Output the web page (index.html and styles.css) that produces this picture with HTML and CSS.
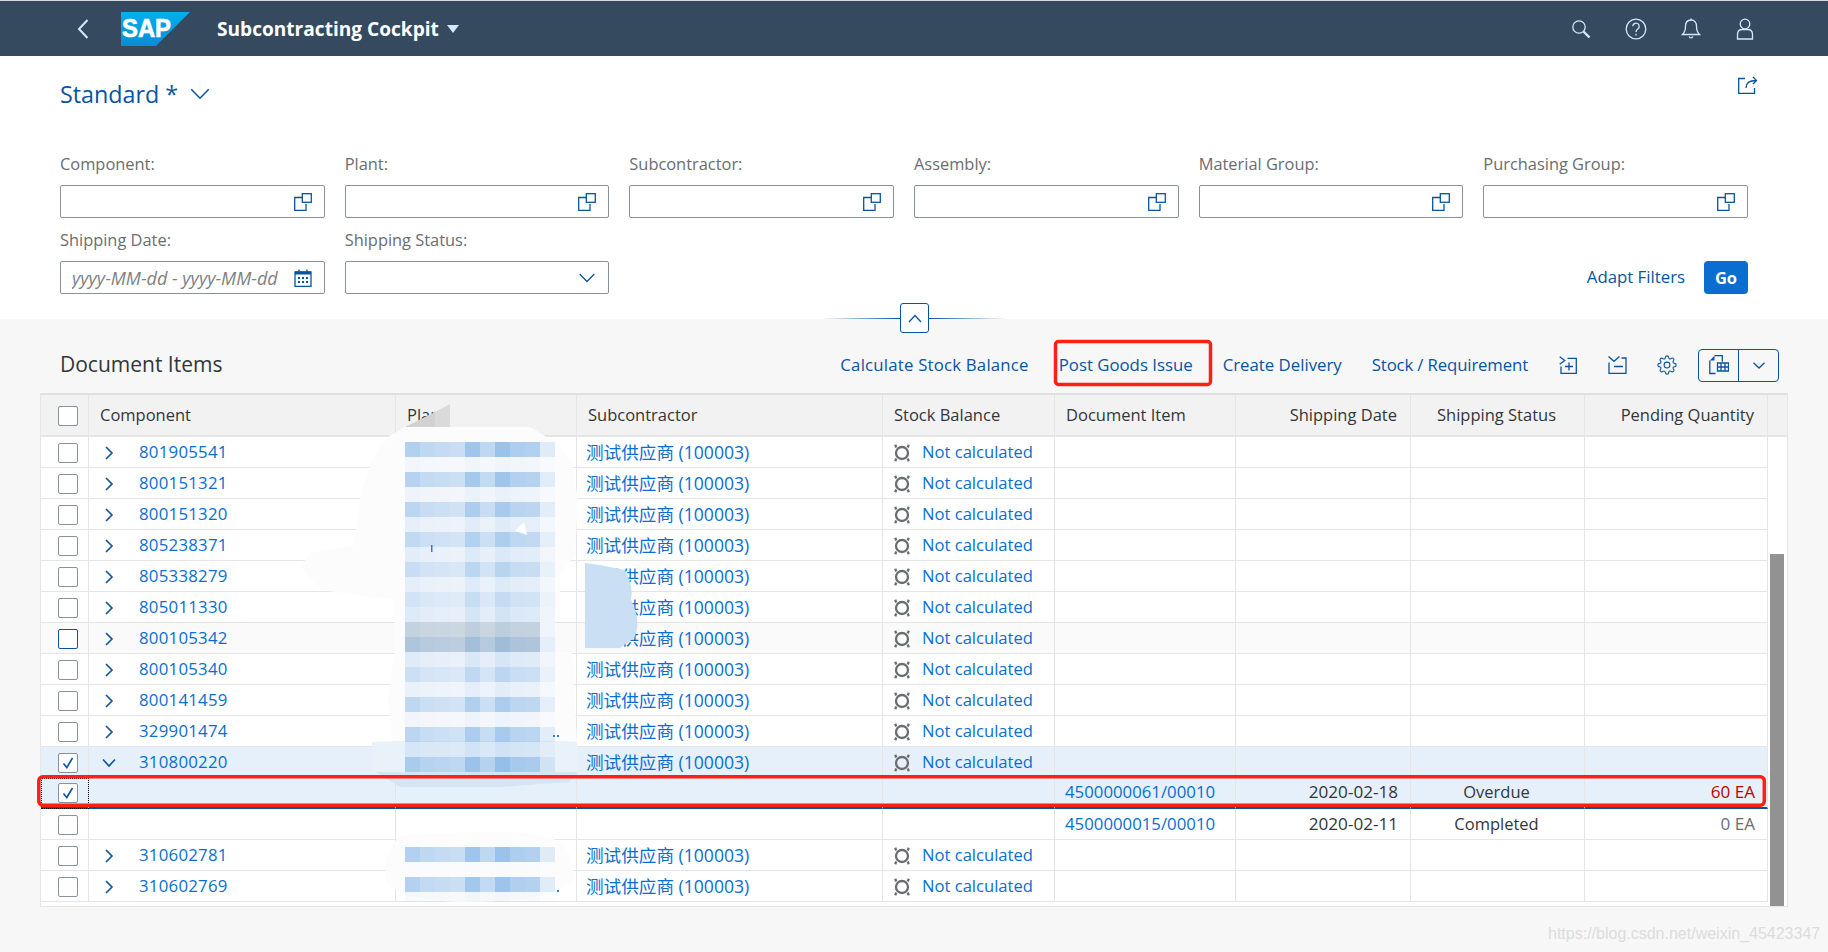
FILE: index.html
```html
<!DOCTYPE html>
<html lang="en">
<head>
<meta charset="utf-8">
<title>Subcontracting Cockpit</title>
<link rel="stylesheet" href="styles.css">
</head>
<body>
<svg class="defs" width="0" height="0" aria-hidden="true">
  <symbol id="i-vh" viewBox="0 0 18 18"><path d="M8 4.500H.7v12.800h11.300V11"/><rect x="8.300" y=".7" width="9" height="8.600"/></symbol>
  <symbol id="i-cal" viewBox="0 0 18 18"><path d="M1 3h16v14.300H1z"/><path d="M1 2.500h16v3H1z" class="fill"/><path d="M5 .5v3M13 .5v3"/><path d="M4 8h2v2H4zM8 8h2v2H8zM12 8h2v2h-2zM4 12h2v2H4zM8 12h2v2H8zM12 12h2v2h-2z" class="fill"/></symbol>
  <symbol id="i-down" viewBox="0 0 16 10"><path d="M.7 1l7.300 7.500L15.300 1"/></symbol>
  <symbol id="i-status" viewBox="0 0 20 20"><circle cx="10" cy="10" r="6"/><path d="M3.200 1.800l1.100 2.700M16.800 1.800l-1.100 2.700M3.200 18.200l1.100-2.700M16.800 18.200l-1.100-2.700" class="thin"/></symbol>
  <symbol id="i-right" viewBox="0 0 10 14"><path d="M2 1l6 6-6 6"/></symbol>
  <symbol id="i-open" viewBox="0 0 14 10"><path d="M1 1.500l6 6.500 6-6.500"/></symbol>
</svg>

<header class="shell">
  <svg class="back" width="12" height="20" viewBox="0 0 12 20"><path d="M10.500 1L2 10l8.500 9"/></svg>
  <svg class="logo" width="69" height="34" viewBox="0 0 69 34">
    <defs><linearGradient id="sap" x1="0" y1="0" x2="0" y2="1"><stop offset="0" stop-color="#00b1eb"/><stop offset="1" stop-color="#0a8bd6"/></linearGradient></defs>
    <path d="M0 0h69L35 34H0z" fill="url(#sap)"/>
    <text x="1" y="25" class="logo-text" textLength="49" lengthAdjust="spacingAndGlyphs">SAP</text>
  </svg>
  <h1 class="app-title">Subcontracting Cockpit</h1>
  <span class="title-arrow"></span>
  <div class="shell-icons">
    <svg width="20" height="20" viewBox="0 0 20 20"><circle cx="8" cy="8" r="6.200"/><path d="M12.500 12.500l6 6" class="heavy"/></svg>
    <svg width="22" height="22" viewBox="0 0 22 22"><circle cx="11" cy="11" r="9.800"/><path d="M7.800 8.300a3.200 3.200 0 1 1 5 2.700c-1.200.8-1.800 1.300-1.800 3"/><path d="M11 15.800v1.800"/></svg>
    <svg width="20" height="22" viewBox="0 0 20 22"><path d="M10 2c-3.800 0-5.500 3-5.500 6.200 0 4-1 6.300-3 8.300h17c-2-2-3-4.300-3-8.300C15.500 5 13.800 2 10 2z"/><path d="M10 .5V2M8.200 18.500c.5 1.800 3 1.800 3.600 0"/></svg>
    <svg width="20" height="22" viewBox="0 0 20 22"><circle cx="10" cy="6" r="4.800"/><path d="M2.500 21v-4.500c0-3 2-5 4.800-5h5.400c2.800 0 4.800 2 4.800 5V21z"/></svg>
  </div>
</header>

<section class="filterbar">
  <div class="variant">
    <span class="variant-name">Standard *</span>
    <svg class="variant-arrow" width="20" height="12"><use href="#i-down"/></svg>
    <svg class="share" width="20" height="18" viewBox="0 0 20 18"><path d="M7 2.500H.7v15h15.800V12"/><path d="M8 12c0-5 3-7.500 10-7.500M15 1l3.500 3.500L15 8"/></svg>
  </div>
  <div class="filters">
    <div class="filter"><label class="filter-label">Component:</label><div class="input"><svg class="ico"><use href="#i-vh"/></svg></div></div>
    <div class="filter"><label class="filter-label">Plant:</label><div class="input"><svg class="ico"><use href="#i-vh"/></svg></div></div>
    <div class="filter"><label class="filter-label">Subcontractor:</label><div class="input"><svg class="ico"><use href="#i-vh"/></svg></div></div>
    <div class="filter"><label class="filter-label">Assembly:</label><div class="input"><svg class="ico"><use href="#i-vh"/></svg></div></div>
    <div class="filter"><label class="filter-label">Material Group:</label><div class="input"><svg class="ico"><use href="#i-vh"/></svg></div></div>
    <div class="filter"><label class="filter-label">Purchasing Group:</label><div class="input"><svg class="ico"><use href="#i-vh"/></svg></div></div>
    <div class="filter"><label class="filter-label">Shipping Date:</label><div class="input"><span class="placeholder">yyyy-MM-dd - yyyy-MM-dd</span><svg class="ico"><use href="#i-cal"/></svg></div></div>
    <div class="filter"><label class="filter-label">Shipping Status:</label><div class="input"><svg class="ico-down"><use href="#i-down"/></svg></div></div>
    <div class="filter-actions"><span class="link">Adapt Filters</span><span class="go">Go</span></div>
  </div>
  <div class="collapser">
    <span class="collapser-line"></span>
    <span class="collapser-btn"><svg width="14" height="9" viewBox="0 0 14 9"><path d="M1 8l6-6.500L13 8"/></svg></span>
    <span class="collapser-line"></span>
  </div>
</section>

<section class="toolbar">
  <h2 class="table-title">Document Items</h2>
  <div class="actions">
    <span class="link wide">Calculate Stock Balance</span>
    <span class="link">Post Goods Issue</span>
    <span class="link">Create Delivery</span>
    <span class="link narrow">Stock / Requirement</span>
    <svg class="tool tool-first" width="18" height="18" viewBox="0 0 18 18"><path d="M.7.7l5 3.800-5 3.800M8.500 2.300h8.800v15H2V10.500M6 10.500h8M10 6.500v8"/></svg>
    <svg class="tool" width="19" height="18" viewBox="0 0 19 18"><path d="M.5.5L6 5.300 11.500.5M1 6.500v10.800h17V2h-4.500M6 10.500h9"/></svg>
    <svg class="tool" width="20" height="20" viewBox="0 0 24 24"><circle cx="12" cy="12" r="3.500"/><path d="M19.400 15a1.650 1.650 0 0 0 .33 1.820l.06.06a2 2 0 0 1 0 2.830 2 2 0 0 1-2.830 0l-.06-.06a1.650 1.650 0 0 0-1.820-.33 1.650 1.650 0 0 0-1 1.510V21a2 2 0 0 1-2 2 2 2 0 0 1-2-2v-.09A1.650 1.650 0 0 0 9 19.400a1.650 1.650 0 0 0-1.820.33l-.06.06a2 2 0 0 1-2.830 0 2 2 0 0 1 0-2.830l.06-.06a1.650 1.650 0 0 0 .33-1.820 1.650 1.650 0 0 0-1.510-1H3a2 2 0 0 1-2-2 2 2 0 0 1 2-2h.09A1.650 1.650 0 0 0 4.600 9a1.650 1.650 0 0 0-.33-1.820l-.06-.06a2 2 0 0 1 0-2.830 2 2 0 0 1 2.830 0l.06.06a1.650 1.650 0 0 0 1.820.33H9a1.650 1.650 0 0 0 1-1.510V3a2 2 0 0 1 2-2 2 2 0 0 1 2 2v.09a1.650 1.650 0 0 0 1 1.510 1.650 1.650 0 0 0 1.820-.33l.06-.06a2 2 0 0 1 2.830 0 2 2 0 0 1 0 2.830l-.06.06a1.650 1.650 0 0 0-.33 1.820V9a1.650 1.650 0 0 0 1.510 1H21a2 2 0 0 1 2 2 2 2 0 0 1-2 2h-.09a1.650 1.650 0 0 0-1.510 1z"/></svg>
    <div class="segmented">
      <span class="seg-main"><svg class="tool" width="20" height="20" viewBox="0 0 20 20"><path d="M5.500.7h7.800v6M6.500 18.500H.8V5.500"/><path d="M.8 5.500L5.500.7v4.800z" class="fill"/><path d="M8.500 8h11v8h-11zM8.500 12h11M12 8v8M16 8v8"/></svg></span>
      <span class="seg-arrow"><svg class="tool" width="12" height="7" viewBox="0 0 12 7"><path d="M.5.7L6 6l5.500-5.300"/></svg></span>
    </div>
  </div>
</section>

<section class="table">
  <div class="table-main">
    <div class="row head">
      <div class="cell check"><span class="box"></span></div>
      <div class="cell">Component</div>
      <div class="cell">Plant</div>
      <div class="cell">Subcontractor</div>
      <div class="cell">Stock Balance</div>
      <div class="cell">Document Item</div>
      <div class="cell right">Shipping Date</div>
      <div class="cell center">Shipping Status</div>
      <div class="cell right">Pending Quantity</div>
    </div>

    <div class="row"><div class="cell check"><span class="box"></span></div><div class="cell comp"><svg class="exp"><use href="#i-right"/></svg><span class="num">801905541</span></div><div class="cell"></div><div class="cell sub">测试供应商 (100003)</div><div class="cell stock"><svg class="st"><use href="#i-status"/></svg><span class="state">Not calculated</span></div><div class="cell"></div><div class="cell"></div><div class="cell"></div><div class="cell"></div></div>
    <div class="row"><div class="cell check"><span class="box"></span></div><div class="cell comp"><svg class="exp"><use href="#i-right"/></svg><span class="num">800151321</span></div><div class="cell"></div><div class="cell sub">测试供应商 (100003)</div><div class="cell stock"><svg class="st"><use href="#i-status"/></svg><span class="state">Not calculated</span></div><div class="cell"></div><div class="cell"></div><div class="cell"></div><div class="cell"></div></div>
    <div class="row"><div class="cell check"><span class="box"></span></div><div class="cell comp"><svg class="exp"><use href="#i-right"/></svg><span class="num">800151320</span></div><div class="cell"></div><div class="cell sub">测试供应商 (100003)</div><div class="cell stock"><svg class="st"><use href="#i-status"/></svg><span class="state">Not calculated</span></div><div class="cell"></div><div class="cell"></div><div class="cell"></div><div class="cell"></div></div>
    <div class="row"><div class="cell check"><span class="box"></span></div><div class="cell comp"><svg class="exp"><use href="#i-right"/></svg><span class="num">805238371</span></div><div class="cell"></div><div class="cell sub">测试供应商 (100003)</div><div class="cell stock"><svg class="st"><use href="#i-status"/></svg><span class="state">Not calculated</span></div><div class="cell"></div><div class="cell"></div><div class="cell"></div><div class="cell"></div></div>
    <div class="row"><div class="cell check"><span class="box"></span></div><div class="cell comp"><svg class="exp"><use href="#i-right"/></svg><span class="num">805338279</span></div><div class="cell"></div><div class="cell sub">测试供应商 (100003)</div><div class="cell stock"><svg class="st"><use href="#i-status"/></svg><span class="state">Not calculated</span></div><div class="cell"></div><div class="cell"></div><div class="cell"></div><div class="cell"></div></div>
    <div class="row"><div class="cell check"><span class="box"></span></div><div class="cell comp"><svg class="exp"><use href="#i-right"/></svg><span class="num">805011330</span></div><div class="cell"></div><div class="cell sub">测试供应商 (100003)</div><div class="cell stock"><svg class="st"><use href="#i-status"/></svg><span class="state">Not calculated</span></div><div class="cell"></div><div class="cell"></div><div class="cell"></div><div class="cell"></div></div>
    <div class="row hover"><div class="cell check"><span class="box focus"></span></div><div class="cell comp"><svg class="exp"><use href="#i-right"/></svg><span class="num">800105342</span></div><div class="cell"></div><div class="cell sub">测试供应商 (100003)</div><div class="cell stock"><svg class="st"><use href="#i-status"/></svg><span class="state">Not calculated</span></div><div class="cell"></div><div class="cell"></div><div class="cell"></div><div class="cell"></div></div>
    <div class="row"><div class="cell check"><span class="box"></span></div><div class="cell comp"><svg class="exp"><use href="#i-right"/></svg><span class="num">800105340</span></div><div class="cell"></div><div class="cell sub">测试供应商 (100003)</div><div class="cell stock"><svg class="st"><use href="#i-status"/></svg><span class="state">Not calculated</span></div><div class="cell"></div><div class="cell"></div><div class="cell"></div><div class="cell"></div></div>
    <div class="row"><div class="cell check"><span class="box"></span></div><div class="cell comp"><svg class="exp"><use href="#i-right"/></svg><span class="num">800141459</span></div><div class="cell"></div><div class="cell sub">测试供应商 (100003)</div><div class="cell stock"><svg class="st"><use href="#i-status"/></svg><span class="state">Not calculated</span></div><div class="cell"></div><div class="cell"></div><div class="cell"></div><div class="cell"></div></div>
    <div class="row"><div class="cell check"><span class="box"></span></div><div class="cell comp"><svg class="exp"><use href="#i-right"/></svg><span class="num">329901474</span></div><div class="cell"></div><div class="cell sub">测试供应商 (100003)</div><div class="cell stock"><svg class="st"><use href="#i-status"/></svg><span class="state">Not calculated</span></div><div class="cell"></div><div class="cell"></div><div class="cell"></div><div class="cell"></div></div>
    <div class="row selected"><div class="cell check"><span class="box checked"><svg class="tick" width="12" height="12" viewBox="0 0 12 12"><path d="M1.500 6.500L4.800 10.500 10.500 1"/></svg></span></div><div class="cell comp"><svg class="exp open"><use href="#i-open"/></svg><span class="num">310800220</span></div><div class="cell"></div><div class="cell sub">测试供应商 (100003)</div><div class="cell stock"><svg class="st"><use href="#i-status"/></svg><span class="state">Not calculated</span></div><div class="cell"></div><div class="cell"></div><div class="cell"></div><div class="cell"></div></div>
    <div class="row selected last-selected"><div class="cell check dotted"><span class="box checked"><svg class="tick" width="12" height="12" viewBox="0 0 12 12"><path d="M1.500 6.500L4.800 10.500 10.500 1"/></svg></span></div><div class="cell"></div><div class="cell"></div><div class="cell"></div><div class="cell"></div><div class="cell doc">4500000061/00010</div><div class="cell right data">2020-02-18</div><div class="cell center">Overdue</div><div class="cell right data overdue">60 EA</div></div>
    <div class="row"><div class="cell check"><span class="box"></span></div><div class="cell"></div><div class="cell"></div><div class="cell"></div><div class="cell"></div><div class="cell doc">4500000015/00010</div><div class="cell right data">2020-02-11</div><div class="cell center">Completed</div><div class="cell right data muted">0 EA</div></div>
    <div class="row"><div class="cell check"><span class="box"></span></div><div class="cell comp"><svg class="exp"><use href="#i-right"/></svg><span class="num">310602781</span></div><div class="cell"></div><div class="cell sub">测试供应商 (100003)</div><div class="cell stock"><svg class="st"><use href="#i-status"/></svg><span class="state">Not calculated</span></div><div class="cell"></div><div class="cell"></div><div class="cell"></div><div class="cell"></div></div>
    <div class="row last"><div class="cell check"><span class="box"></span></div><div class="cell comp"><svg class="exp"><use href="#i-right"/></svg><span class="num">310602769</span></div><div class="cell"></div><div class="cell sub">测试供应商 (100003)</div><div class="cell stock"><svg class="st"><use href="#i-status"/></svg><span class="state">Not calculated</span></div><div class="cell"></div><div class="cell"></div><div class="cell"></div><div class="cell"></div></div>
  </div>
  <div class="scroll">
    <div class="scroll-head"></div>
    <div class="scroll-track"><div class="scroll-thumb"></div></div>
  </div>
</section>

<svg class="overlay" width="1828" height="952" viewBox="0 0 1828 952" aria-hidden="true">
  <defs>
    <linearGradient id="mos" gradientUnits="userSpaceOnUse" x1="405" x2="555" y1="0" y2="0">
      <stop offset="0" stop-color="#95bfea" stop-opacity=".76"/><stop offset=".1" stop-color="#95bfea" stop-opacity=".76"/>
      <stop offset=".1" stop-color="#95bfea" stop-opacity=".62"/><stop offset=".2" stop-color="#95bfea" stop-opacity=".62"/>
      <stop offset=".2" stop-color="#95bfea" stop-opacity=".57"/><stop offset=".3" stop-color="#95bfea" stop-opacity=".57"/>
      <stop offset=".3" stop-color="#95bfea" stop-opacity=".52"/><stop offset=".4" stop-color="#95bfea" stop-opacity=".52"/>
      <stop offset=".4" stop-color="#95bfea" stop-opacity=".94"/><stop offset=".5" stop-color="#95bfea" stop-opacity=".94"/>
      <stop offset=".5" stop-color="#95bfea" stop-opacity=".62"/><stop offset=".6" stop-color="#95bfea" stop-opacity=".62"/>
      <stop offset=".6" stop-color="#95bfea" stop-opacity="1"/><stop offset=".7" stop-color="#95bfea" stop-opacity="1"/>
      <stop offset=".7" stop-color="#95bfea" stop-opacity=".8"/><stop offset=".8" stop-color="#95bfea" stop-opacity=".8"/>
      <stop offset=".8" stop-color="#95bfea" stop-opacity=".76"/><stop offset=".9" stop-color="#95bfea" stop-opacity=".76"/>
      <stop offset=".9" stop-color="#95bfea" stop-opacity=".29"/><stop offset="1" stop-color="#95bfea" stop-opacity=".29"/>
    </linearGradient>
  </defs>

  <path class="blob" d="M388 437L405 427H530L555 442L572 462L578 500L575 555L560 575V622H555V652H572L577 742H392L388 700L392 665L395 652V622L395 600L320 590L300 566L312 552L355 545L358 510L362 490L372 460Z"/>
  <path class="blob-sel" d="M372 742L400 741H560L577 742V772H372Z"/>
  <path class="blob-low" d="M376 772H577L570 782 540 784 500 787 400 787Z"/>
  <path class="blob" d="M400 836Q440 832 500 832Q540 832 560 842Q575 855 573 880Q560 900 470 902Q400 902 385 880Q385 850 400 836Z"/>

  <g class="bands">
    <rect x="405" y="442" width="150" height="15" opacity=".95"/>
    <rect x="405" y="457" width="150" height="15" opacity=".12"/>
    <rect x="405" y="472" width="150" height="15" opacity=".9"/>
    <rect x="405" y="487" width="150" height="15" opacity=".18"/>
    <rect x="405" y="502" width="150" height="15" opacity=".82"/>
    <rect x="405" y="517" width="150" height="15" opacity=".28"/>
    <rect x="405" y="532" width="150" height="15" opacity=".76"/>
    <rect x="405" y="547" width="150" height="15" opacity=".32"/>
    <rect x="405" y="562" width="150" height="15" opacity=".66"/>
    <rect x="405" y="577" width="150" height="15" opacity=".3"/>
    <rect x="405" y="592" width="150" height="15" opacity=".54"/>
    <rect x="405" y="607" width="150" height="15" opacity=".4"/>
    <rect x="405" y="622" width="150" height="15" opacity=".4"/>
    <rect x="405" y="637" width="150" height="15" opacity=".76"/>
    <rect x="405" y="652" width="150" height="15" opacity=".36"/>
    <rect x="405" y="667" width="150" height="15" opacity=".62"/>
    <rect x="405" y="682" width="150" height="15" opacity=".24"/>
    <rect x="405" y="697" width="150" height="15" opacity=".78"/>
    <rect x="405" y="712" width="150" height="15" opacity=".14"/>
    <rect x="405" y="727" width="150" height="15" opacity=".82"/>
    <rect x="405" y="742" width="150" height="15" opacity=".3"/>
    <rect x="405" y="757" width="150" height="15" opacity="1"/>
    <rect x="405" y="847" width="150" height="15" opacity=".95"/>
    <rect x="405" y="862" width="150" height="15" opacity=".03"/>
    <rect x="405" y="877" width="150" height="15" opacity=".92"/>
    <rect x="405" y="892" width="150" height="10" opacity=".1"/>
  </g>
  <rect class="hover-tint" x="405" y="622" width="135" height="30"/>

  <path class="patch-b" d="M585 563L600 565L625 570Q634 588 631 600Q642 622 634 638L620 648H585Z"/>
  <path class="patch-w" d="M515 531L524 522L527 535Z"/>
  <rect class="tick-blue" x="431" y="545" width="1.500" height="7"/>
  <rect class="tick-blue" x="553" y="735" width="2" height="2"/>
  <rect class="tick-blue" x="557" y="735" width="2" height="2"/>
  <rect class="tick-blue" x="557" y="890" width="2" height="2"/>
  <path class="patch-g1" d="M405 427L435 412V427Z"/>
  <path class="patch-g2" d="M435 412L450 404V427H435Z"/>

  <rect class="redbox" x="1055.500" y="341.500" width="155" height="43" rx="3"/>
  <rect class="redbox" x="38.800" y="776.800" width="1725.500" height="28.500" rx="4"/>
</svg>

<div class="watermark">https://blog.csdn.net/weixin_45423347</div>
</body>
</html>
```

FILE: styles.css
```css
* { box-sizing: border-box; }
html, body { margin: 0; padding: 0; }
body {
  position: relative;
  width: 1828px;
  height: 952px;
  overflow: hidden;
  background: #f7f7f7;
  color: #32363a;
  font-family: "Open Sans", "Noto Sans CJK SC", sans-serif;
  font-size: 16.500px;
}
svg { fill: none; stroke: #0854a0; stroke-width: 1.3; display: block; }
svg .fill { fill: #0854a0; stroke: none; }
.defs { position: absolute; }

/* shell */
.shell {
  height: 56px;
  border-top: 1px solid #d9dcdf;
  background: #354a5f;
  display: flex;
  align-items: center;
  padding-left: 77px;
}
.shell svg { stroke: #d1e8ff; }
.back { stroke-width: 2; margin-right: 32px; }
.shell .logo { stroke: none; margin-right: 27px; }
.logo-text {
  font-family: "Liberation Sans", sans-serif;
  font-weight: 700;
  font-size: 25px;
  fill: #fff;
  stroke: #fff;
  stroke-width: .7;
}
.app-title {
  margin: 0;
  font-size: 19.100px;
  font-weight: 700;
  color: #fff;
  line-height: 24px;
}
.title-arrow {
  margin-left: 8px;
  margin-top: 1px;
  border-left: 6px solid transparent;
  border-right: 6px solid transparent;
  border-top: 8px solid #d1e8ff;
}
.shell-icons {
  margin-left: auto;
  margin-right: 73px;
  display: flex;
  align-items: center;
  gap: 34px;
}
.shell-icons .heavy { stroke-width: 2.400; }

/* filter bar */
.filterbar {
  position: relative;
  height: 263px;
  background: #fff;
  padding: 20px 80px 0 60px;
}
.variant {
  display: flex;
  align-items: center;
  height: 36px;
  margin-bottom: 41px;
}
.variant-name { font-size: 23.300px; color: #0854a0; line-height: 36px; }
.variant-arrow { margin-left: 12px; }
.share { margin-left: auto; margin-right: -10px; margin-bottom: 18px; }

.filters {
  display: grid;
  grid-template-columns: repeat(6, 1fr);
  column-gap: 20px;
  row-gap: 11px;
}
.filter-label {
  display: block;
  height: 22px;
  line-height: 22px;
  margin-bottom: 10px;
  font-size: 16.400px;
  color: #6a6d70;
}
.input {
  height: 33px;
  background: #fff;
  border: 1px solid #89919a;
  border-radius: 2px;
  display: flex;
  align-items: center;
  justify-content: flex-end;
  padding: 0 12px 0 11px;
}
.ico { width: 18px; height: 18px; flex: none; }
.ico-down { width: 16px; height: 10px; flex: none; margin-right: 1px; }
.placeholder {
  flex: 1;
  overflow: hidden;
  white-space: nowrap;
  font-style: italic;
  font-size: 18px;
  color: #7d8083;
  margin-right: 16px;
}
.filter-actions {
  grid-column: span 4;
  align-self: end;
  height: 33px;
  display: flex;
  align-items: center;
  justify-content: flex-end;
  gap: 19px;
}
.link { color: #0854a0; white-space: nowrap; font-size: 16.800px; padding-bottom: 2px; }
.link.wide { letter-spacing: .2px; }
.link.narrow { letter-spacing: -.15px; }
.go {
  width: 44px;
  height: 33px;
  background: #0a6ed1;
  color: #fff;
  font-weight: 700;
  border-radius: 4px;
  display: flex;
  align-items: center;
  justify-content: center;
}

.collapser {
  position: absolute;
  left: 822px;
  top: 247px;
  width: 185px;
  height: 30px;
  display: flex;
  align-items: center;
}
.collapser-line {
  flex: 1;
  height: 1px;
  background: linear-gradient(90deg, rgba(8, 84, 160, 0), #0854a0);
}
.collapser-line:last-child { background: linear-gradient(90deg, #0854a0, rgba(8, 84, 160, 0)); }
.collapser-btn {
  width: 29px;
  height: 30px;
  background: #fff;
  border: 1px solid #0854a0;
  border-radius: 3px;
  display: flex;
  align-items: center;
  justify-content: center;
}

/* toolbar */
.toolbar {
  height: 74px;
  padding: 18px 49px 0 60px;
  display: flex;
  align-items: center;
  justify-content: space-between;
}
.table-title { margin: 0 0 2px; font-size: 21px; font-weight: 400; color: #32363a; }
.actions { display: flex; align-items: center; gap: 30px; }
.tool-first { margin-right: 1px; margin-left: 1px; }
.segmented {
  margin-left: -9px;
  width: 81px;
  height: 33px;
  border: 1px solid #0854a0;
  border-radius: 4px;
  display: flex;
  align-items: stretch;
}
.seg-main {
  width: 40px;
  border-right: 1px solid #0854a0;
  display: flex;
  align-items: center;
  justify-content: center;
}
.seg-arrow { flex: 1; display: flex; align-items: center; justify-content: center; }

/* table */
.table {
  margin-left: 40px;
  width: 1748px;
  height: 514px;
  border-top: 2px solid #e0e0e0;
  border-left: 1px solid #e5e5e5;
  border-right: 1px solid #e5e5e5;
  border-bottom: 1px solid #e5e5e5;
  background: #fff;
  display: flex;
}
.table-main { width: 1727px; }
.row {
  display: grid;
  grid-template-columns: 48px 307px 181px 306px 172px 181px 175px 174px 183px;
  height: 31px;
}
.row.head { height: 42px; background: #f2f2f2; }
.row.head .cell { border-bottom: 2px solid #e5e5e5; }
.cell {
  display: flex;
  align-items: center;
  padding: 0 13px 2px 11px;
  border-right: 1px solid #e5e5e5;
  border-bottom: 1px solid #e5e5e5;
  white-space: nowrap;
  min-width: 0;
}
.cell.right { justify-content: flex-end; padding-right: 13px; }
.cell.center { justify-content: center; }
.cell.data { font-size: 17.100px; padding-right: 12px; }
.check { padding: 1px 0 0 17px; }
.box {
  width: 20px;
  height: 20px;
  background: #fff;
  border: 1px solid #89919a;
  border-radius: 2px;
  display: flex;
  align-items: center;
  justify-content: center;
}
.box.focus { border-color: #0854a0; }
.tick { stroke-width: 1.600; }
.comp { padding-left: 15px; }
.exp { width: 10px; height: 14px; stroke-width: 1.600; flex: none; margin-right: 25px; margin-top: 3px; }
.exp.open { width: 14px; height: 10px; margin-left: -2px; margin-right: 23px; }
.num { color: #0a6ed1; font-size: 16.800px; letter-spacing: .25px; }
.state { color: #0a6ed1; font-size: 16.600px; }
.sub { color: #0a6ed1; padding-left: 9px; font-size: 17.600px; }
.stock { padding-left: 9px; }
.st { width: 20px; height: 20px; flex: none; stroke: #6a6d70; stroke-width: 2.300; margin-right: 10px; margin-top: 3px; }
.st .thin { stroke-width: 1.200; }
.doc { padding-left: 10px; color: #0a6ed1; font-size: 16.800px; }
.overdue { color: #bb0000; }
.muted { color: #6a6d70; }
.hover { background: #fafafa; }
.selected { background: #e5f0fa; }
.last-selected .cell { border-bottom: 2px solid #0854a0; }
.last-selected .dotted { outline: 1px dotted #000; outline-offset: -1px; }

.scroll { width: 19px; flex: none; display: flex; flex-direction: column; }
.scroll-head { height: 42px; background: #f2f2f2; border-bottom: 2px solid #e5e5e5; }
.scroll-track {
  flex: 1;
  display: flex;
  flex-direction: column;
  justify-content: flex-end;
  padding: 0 3px 0 2px;
}
.scroll-thumb { height: 352px; background: #929292; }

/* annotations drawn over the screenshot */
.overlay { position: absolute; left: 0; top: 0; pointer-events: none; stroke: none; }
.overlay .blob { fill: #fcfcfd; }
.overlay .blob-sel { fill: #e9f1f9; }
.overlay .blob-low { fill: #d6e5f4; }
.overlay .bands rect { fill: url(#mos); }
.overlay .hover-tint { fill: #6f7f8f; opacity: .22; }
.overlay .patch-b { fill: #cbdff4; }
.overlay .patch-w { fill: #fff; }
.overlay .tick-blue { fill: #2a7fd0; }
.overlay .patch-g1 { fill: #d2d2d2; }
.overlay .patch-g2 { fill: #dadada; }
.overlay .redbox { fill: none; stroke: #fe2015; stroke-width: 3.500; }

.watermark {
  position: absolute;
  left: 1548px;
  top: 923px;
  font-family: "Liberation Sans", sans-serif;
  font-size: 16px;
  line-height: 22px;
  color: #dcdcdc;
  white-space: nowrap;
}
```
